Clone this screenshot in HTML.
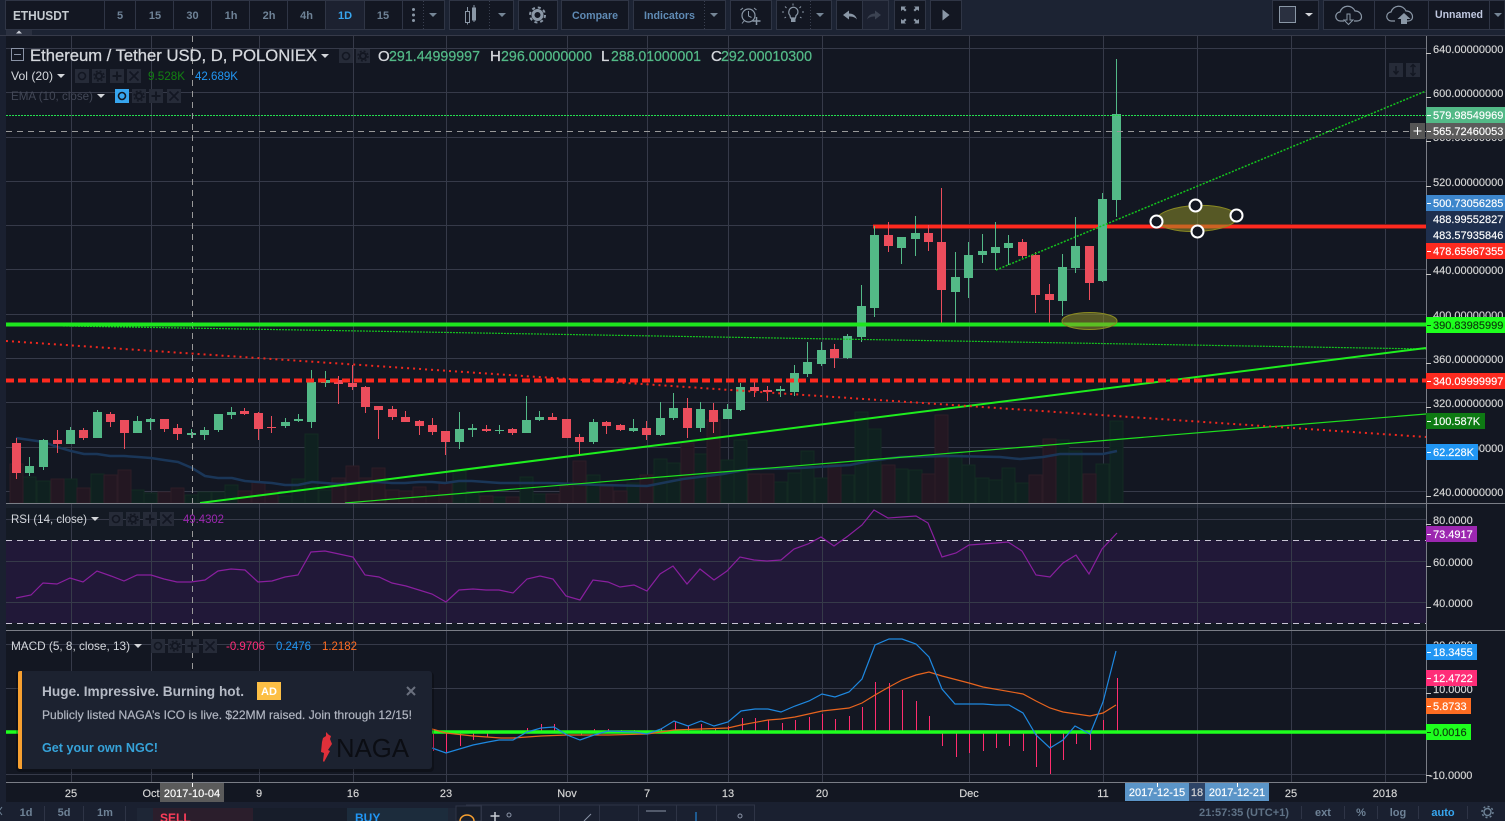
<!DOCTYPE html>
<html><head><meta charset="utf-8"><style>
html,body{margin:0;padding:0;background:#131722;width:1505px;height:821px;overflow:hidden}
svg{display:block}
text{font-family:"Liberation Sans",sans-serif}
.a{font-size:11px;fill:#d6d6d6;stroke:#d6d6d6;stroke-width:.15px}
.l{font-size:11px;fill:#fff;stroke:#fff;stroke-width:.15px}
.dk{fill:#0c3a0c;stroke:#0c3a0c}
.t{font-size:11px;fill:#d8d8d8;stroke:#d8d8d8;stroke-width:.15px;text-anchor:middle}
.w{fill:#fff;stroke:#fff}
.b{font-size:11px;font-weight:bold;fill:#6e8296;text-anchor:middle}
.n{font-size:11px;font-weight:bold;fill:#6e8296}
.h1{stroke:#d4d7dc;stroke-width:.3px}
.h2{stroke:#53b987;stroke-width:.25px}
</style></head><body>
<svg width="1505" height="821" viewBox="0 0 1505 821" xmlns="http://www.w3.org/2000/svg">
<defs>
<g id="e"><rect width="14" height="14" fill="#262b38"/><circle cx="7" cy="7" r="3.5" fill="none" stroke="#131722" stroke-width="1.6"/></g>
<g id="g"><rect width="14" height="14" fill="#262b38"/><circle cx="7" cy="7" r="3" fill="none" stroke="#131722" stroke-width="2"/><circle cx="7" cy="7" r="5" fill="none" stroke="#131722" stroke-width="1.4" stroke-dasharray="2 2"/></g>
<g id="p"><rect width="14" height="14" fill="#262b38"/><path d="M7 2.5v9M2.5 7h9" stroke="#131722" stroke-width="2"/></g>
<g id="x"><rect width="14" height="14" fill="#262b38"/><path d="M2.5 2.5l9 9M11.5 2.5l-9 9" stroke="#131722" stroke-width="1.6"/></g>
<g id="c"><path d="M0 0h8l-4 4z" fill="#d4d6da"/></g>
<g id="d"><path d="M0 0h8l-4 4z" fill="#758696"/></g>
</defs>

<rect width="1505" height="821" fill="#131722"/>
<rect x="6" y="504" width="1420" height="126" fill="#141a24"/>
<rect x="6" y="504" width="1420" height="4" fill="#1a212d"/>
<rect x="6" y="540" width="1420" height="83" fill="#211838"/>

<!-- grid -->
<path d="M71.5 36V782M151.5 36V782M259.5 36V782M353.5 36V782M446.5 36V782M567.5 36V782M647.5 36V782M728.5 36V782M822.5 36V782M969.5 36V782M1103.5 36V782M1197.5 36V782M1291.5 36V782M1385.5 36V782" stroke="#363a49" stroke-width="1"/>
<path d="M6 48.500H1426M6 92.500H1426M6 137.500H1426M6 181.500H1426M6 225.500H1426M6 269.500H1426M6 314.500H1426M6 358.500H1426M6 402.500H1426M6 447.500H1426M6 491.500H1426M6 519.500H1426M6 561.500H1426M6 602.500H1426M6 644.500H1426M6 688.500H1426M6 732.500H1426M6 774.500H1426" stroke="#363a49" stroke-width="1"/>

<!-- volume -->
<g shape-rendering="crispEdges" stroke-width="1">
<path fill="#0f2120" stroke="#132a22" d="M23 477h13V503h-13zM37 481h13V503h-13zM64 479h13V503h-13zM91 474h13V503h-13zM131 490h13V503h-13zM144 493h13V503h-13zM185 495h13V503h-13zM198 492h13V503h-13zM212 492h13V503h-13zM225 485h13V503h-13zM279 496h13V503h-13zM292 479h13V503h-13zM305 434h13V503h-13zM319 490h13V503h-13zM453 471h13V503h-13zM466 492h13V503h-13zM493 497h13V503h-13zM520 477h13V503h-13zM533 494h13V503h-13zM587 475h13V503h-13zM627 483h13V503h-13zM654 459h13V503h-13zM667 463h13V503h-13zM694 454h13V503h-13zM721 460h13V503h-13zM734 440h13V503h-13zM774 482h13V503h-13zM788 473h13V503h-13zM801 451h13V503h-13zM815 478h13V503h-13zM841 475h13V503h-13zM855 412h13V503h-13zM868 429h13V503h-13zM895 469h13V503h-13zM909 470h13V503h-13zM949 452h13V503h-13zM962 465h13V503h-13zM976 478h13V503h-13zM989 480h13V503h-13zM1002 468h13V503h-13zM1016 483h13V503h-13zM1056 440h13V503h-13zM1069 451h13V503h-13zM1096 464h13V503h-13zM1110 421h13V503h-13z"/>
<path fill="#231722" stroke="#2c1c27" d="M10 464h13V503h-13zM51 479h13V503h-13zM77 488h13V503h-13zM104 475h13V503h-13zM118 470h13V503h-13zM158 492h13V503h-13zM171 488h13V503h-13zM238 491h13V503h-13zM252 482h13V503h-13zM265 491h13V503h-13zM332 478h13V503h-13zM346 466h13V503h-13zM359 478h13V503h-13zM372 468h13V503h-13zM386 490h13V503h-13zM399 491h13V503h-13zM413 487h13V503h-13zM426 491h13V503h-13zM439 483h13V503h-13zM480 496h13V503h-13zM506 497h13V503h-13zM546 494h13V503h-13zM560 486h13V503h-13zM573 461h13V503h-13zM600 486h13V503h-13zM614 491h13V503h-13zM640 475h13V503h-13zM681 443h13V503h-13zM707 420h13V503h-13zM748 474h13V503h-13zM761 474h13V503h-13zM828 464h13V503h-13zM882 465h13V503h-13zM922 474h13V503h-13zM935 415h13V503h-13zM1029 475h13V503h-13zM1043 439h13V503h-13zM1083 474h13V503h-13z"/>
</g>
<!-- vol MA -->
<polyline fill="none" stroke="#1a3658" stroke-width="2.500" points="16,438 30,440 44,442 57,447 71,451 84,454 97,454 110,456 124,456 138,457 151,458 164,460 178,462 192,468 205,476 218,478 232,478 245,481 258,482 272,483 285,485 298,485 312,482 325,483 338,484 352,483 365,482 378,482 392,483 405,483 419,482 432,482 445,483 459,481 472,481 486,482 500,483 550,483 600,485 647,486 683,479 723,474 750,469 800,468 850,465 870,461 900,457 950,456 1000,457 1020,459 1043,457 1060,454 1103,454 1117,451"/>

<!-- red level behind candles -->
<path d="M873 226.500H1426" stroke="#7f1d1d" stroke-width="5"/>
<path d="M873 226.500H1426" stroke="#ff2a1f" stroke-width="3"/>

<!-- candles -->
<path shape-rendering="crispEdges" fill="none" stroke="#53b987" d="M29.5 457V476M43.5 439V470M70.5 427V444M97.5 410V438M137.5 416V433M150.5 418V430M191.5 429V438M204.5 427V440M218.5 414V432M231.5 407V419M285.500 418V428M298.5 414V422M311.5 370V428M325.5 371V387M459.5 412V449M472.5 424V437M499.5 425V434M526.5 396V433M539.5 411V421M593.5 419V444M633.5 419V432M660.5 402V436M673.5 393V420M700.5 402V432M727.5 404V419M740.5 383V411M780.5 386V397M794.5 365V396M807.5 342V377M821.5 342V366M847.5 334V359M861.5 285V342M874.5 226V317M901.5 237V264M915.5 216V256M955.5 252V326M968.5 242V298M982.5 234V263M995.5 222V270M1008.5 235V265M1062.5 254V316M1075.5 217V273M1102.5 193V282M1116.5 59V217"/>
<path shape-rendering="crispEdges" fill="#53b987" d="M25 466h9V473h-9zM39 440h9V467h-9zM66 430h9V444h-9zM93 412h9V438h-9zM133 421h9V433h-9zM146 419h9V422h-9zM187 433h9V435h-9zM200 430h9V435h-9zM214 414h9V430h-9zM227 412h9V415h-9zM281 422h9V426h-9zM294 419h9V421h-9zM307 382h9V422h-9zM321 380h9V383h-9zM455 429h9V442h-9zM468 428h9V430h-9zM495 430h9V431h-9zM522 420h9V433h-9zM535 417h9V420h-9zM589 422h9V442h-9zM629 428h9V431h-9zM656 418h9V435h-9zM669 408h9V418h-9zM696 409h9V428h-9zM723 409h9V419h-9zM736 387h9V410h-9zM776 389h9V391h-9zM790 373h9V392h-9zM803 362h9V374h-9zM817 350h9V364h-9zM843 336h9V358h-9zM857 306h9V337h-9zM870 235h9V308h-9zM897 237h9V248h-9zM911 233h9V239h-9zM951 277h9V292h-9zM964 255h9V278h-9zM978 251h9V255h-9zM991 247h9V253h-9zM1004 243h9V248h-9zM1058 267h9V301h-9zM1071 246h9V268h-9zM1098 199h9V281h-9zM1112 114h9V200h-9z"/>
<path shape-rendering="crispEdges" fill="none" stroke="#eb4d5c" d="M16.5 438V479M57.5 430V453M83.5 428V440M110.5 412V427M124.5 420V449M164.5 419V432M177.5 424V440M244.5 408V415M258.5 412V440M271.5 416V433M338.5 376V404M352.5 365V390M365.5 386V413M378.5 406V439M392.5 406V420M405.5 411V422M419.5 420V435M432.5 418V435M445.5 431V455M486.5 425V432M512.5 428V435M552.5 413V420M566.5 419V438M579.5 434V455M606.5 421V434M620.5 424V431M646.5 421V440M687.5 398V438M713.5 403V433M754.5 381V397M767.5 386V401M834.5 344V368M888.5 222V252M928.5 225V251M941.5 188V326M1022.5 239V258M1035.5 252V313M1049.5 284V325M1089.5 246V300"/>
<path shape-rendering="crispEdges" fill="#eb4d5c" d="M12 443h9V473h-9zM53 440h9V444h-9zM79 430h9V438h-9zM106 414h9V422h-9zM120 420h9V433h-9zM160 419h9V429h-9zM173 428h9V434h-9zM240 411h9V414h-9zM254 413h9V429h-9zM267 427h9V428h-9zM334 380h9V384h-9zM348 383h9V387h-9zM361 387h9V407h-9zM374 406h9V410h-9zM388 409h9V417h-9zM401 417h9V422h-9zM415 421h9V426h-9zM428 425h9V432h-9zM441 431h9V442h-9zM482 429h9V431h-9zM508 429h9V433h-9zM548 417h9V420h-9zM562 419h9V438h-9zM575 437h9V442h-9zM602 422h9V426h-9zM616 425h9V430h-9zM642 428h9V435h-9zM683 408h9V428h-9zM709 410h9V422h-9zM750 387h9V391h-9zM763 390h9V392h-9zM830 349h9V358h-9zM884 235h9V246h-9zM924 233h9V242h-9zM937 242h9V290h-9zM1018 242h9V256h-9zM1031 255h9V295h-9zM1045 294h9V300h-9zM1085 246h9V283h-9z"/>

<!-- trend lines -->
<path d="M6 115.500H1426" stroke="#25e050" stroke-width="1" stroke-dasharray="2 1" shape-rendering="crispEdges"/>
<path d="M6 131.500H1426" stroke="#9a9a9a" stroke-width="1" stroke-dasharray="6 5"/>
<path d="M192.500 36V782" stroke="#9a9a9a" stroke-width="1" stroke-dasharray="6 5"/>
<path d="M996 270L1426 91" stroke="#14c41e" stroke-width="1.500" stroke-dasharray="2 1.500"/>
<path d="M6 325L1426 349" stroke="#14c41e" stroke-width="1.200" stroke-dasharray="2 1"/>
<path d="M200 503L1426 348" stroke="#1eee1e" stroke-width="2"/>
<path d="M345 503L1426 414" stroke="#1ee01e" stroke-width="1.200"/>
<path d="M6 341L1426 437" stroke="#f0281e" stroke-width="2" stroke-dasharray="2 4"/>
<path d="M6 380.500H1426" stroke="#ff2a1f" stroke-width="4" stroke-dasharray="8 4"/>
<path d="M6 324.500H1426" stroke="#1ee61e" stroke-width="4"/>

<!-- ellipses -->
<ellipse cx="1089.500" cy="321" rx="27.500" ry="8.500" fill="#9a9a28" fill-opacity=".5" stroke="#8b8b22" stroke-width="1"/>
<ellipse cx="1197" cy="218.500" rx="40" ry="13" fill="#9a9a28" fill-opacity=".5" stroke="#8b8b22" stroke-width="1" transform="rotate(-2 1197 218.500)"/>
<g fill="#131722" stroke="#fff" stroke-width="2"><circle cx="1156.500" cy="221.500" r="6"/><circle cx="1195.500" cy="205.500" r="6"/><circle cx="1197.500" cy="231.500" r="6"/><circle cx="1236.500" cy="215.500" r="6"/></g>

<!-- RSI -->
<path d="M6 540.500H1426M6 623.500H1426" stroke="#c8c4d4" stroke-width="1" stroke-dasharray="6 5"/>
<polyline fill="none" stroke="#8a1f9f" stroke-width="1.200" points="16,598 31,595 43,583 57,584 70,578 83,582 97,571 111,576 124,581 137,575 151,575 164,579 177,582 191,582 205,580 218,571 231,569 245,570 258,582 272,581 285,577 298,575 311,552 325,551 339,554 353,557 365,575 379,577 392,583 406,586 419,590 432,594 446,602 459,590 473,589 486,590 499,590 513,593 527,579 540,576 553,579 566,596 580,600 593,580 608,582 620,587 634,585 647,591 660,574 673,566 687,584 700,569 714,580 727,571 740,557 754,560 767,561 781,560 794,549 808,544 821,537 834,546 848,536 862,525 874,510 888,518 902,517 916,516 928,523 942,557 956,553 969,545 983,544 996,543 1008,542 1022,551 1036,575 1050,577 1063,563 1076,555 1089,574 1102,549 1117,533"/>

<!-- MACD -->
<path d="M433.500 732V751M446.500 732V753M460.500 732V746M473.500 732V740M487.500 732V737M500.500 732V733M527.500 732V728M541.500 732V724M554.500 732V724M567.500 732V733M581.500 732V735M594.500 732V729M608.500 732V729M621.500 732V730M634.500 732V730M647.500 732V734M661.500 732V728M675.500 732V722M688.500 732V726M701.500 732V724M715.500 732V728M728.500 732V726M742.500 732V718M755.500 732V718M768.500 732V720M782.500 732V723M795.500 732V720M809.500 732V717M822.500 732V714M835.500 732V719M849.500 732V716M862.500 732V707M875.500 732V682M889.500 732V683M902.500 732V690M916.500 732V701M929.500 732V716M942.500 732V746M956.500 732V757M969.500 732V753M983.500 732V751M996.500 732V748M1009.500 732V746M1023.500 732V751M1036.500 732V767M1050.500 732V774M1063.500 732V760M1076.500 732V744M1090.500 732V750M1103.500 732V720M1117.500 732V678" stroke="#ff2d6e" stroke-width="1"/>
<path d="M6 732H1426" stroke="#1eff1e" stroke-width="3.500"/>
<polyline fill="none" stroke="#e8641e" stroke-width="1.200" points="432,729 446,733 473,736 501,738 513,738 541,736 567,735 609,735 647,734 661,732 674,730 701,729 728,728 741,725 768,720 781,719 795,717 822,711 849,708 862,703 875,695 889,687 902,680 916,675 929,672 942,676 969,683 983,687 1023,694 1036,701 1050,708 1063,712 1090,716 1103,713 1116,705"/>
<polyline fill="none" stroke="#1e88e0" stroke-width="1.200" points="432,748 446,753 473,745 488,742 499,740 513,740 527,732 541,728 554,727 567,735 580,740 594,735 608,731 634,732 647,734 661,729 674,721 688,726 701,721 714,726 728,722 741,711 755,709 768,709 781,712 795,706 809,701 822,694 835,697 849,692 862,679 875,645 889,639 902,639 916,644 929,657 942,689 955,704 969,704 983,704 996,705 1009,705 1023,713 1036,735 1050,748 1063,740 1075,726 1090,734 1103,702 1116,651"/>

<!-- separators and axis -->
<rect x="6" y="503" width="1420" height="1" fill="#7a7d86"/>
<rect x="6" y="630" width="1420" height="1" fill="#7a7d86"/>
<rect x="6" y="782" width="1420" height="1" fill="#7a7d86"/>
<rect x="1426" y="36" width="79" height="746" fill="#131722"/>
<rect x="1426" y="36" width="1" height="747" fill="#7a7d86"/>
<rect x="1427" y="503" width="78" height="1" fill="#7a7d86"/>
<rect x="1427" y="630" width="78" height="1" fill="#7a7d86"/>

<!-- price axis -->
<g>
<text class="a" x="1433" y="53">640.00000000</text>
<text class="a" x="1433" y="97">600.00000000</text>
<text class="a" x="1433" y="141">560.00000000</text>
<text class="a" x="1433" y="186">520.00000000</text>
<text class="a" x="1433" y="274">440.00000000</text>
<text class="a" x="1433" y="319">400.00000000</text>
<text class="a" x="1433" y="363">360.00000000</text>
<text class="a" x="1433" y="407">320.00000000</text>
<text class="a" x="1433" y="452">280.00000000</text>
<text class="a" x="1433" y="496">240.00000000</text>
<text class="a" x="1433" y="524">80.0000</text>
<text class="a" x="1433" y="566">60.0000</text>
<text class="a" x="1433" y="607">40.0000</text>
<text class="a" x="1433" y="649">20.0000</text>
<text class="a" x="1433" y="693">10.0000</text>
<text class="a" x="1429" y="779">-10.0000</text>
</g>
<rect x="1426" y="107" width="79" height="16" fill="#53b987"/><text class="l" x="1433" y="119">579.98549969</text>
<rect x="1426" y="123" width="79" height="16" fill="#5c5c5c"/><text class="l" x="1433" y="135">565.72460053</text>
<rect x="1410" y="123" width="15" height="16" fill="#555"/><path d="M1417.500 127v8M1413.500 131h8" stroke="#fff" stroke-width="1"/>
<rect x="1426" y="195" width="79" height="16" fill="#3d86cc"/><text class="l" x="1433" y="207">500.73056285</text>
<rect x="1426" y="211" width="79" height="16" fill="#1e2f4e"/><text class="l" x="1433" y="223">488.99552827</text>
<rect x="1426" y="227" width="79" height="16" fill="#1e2f4e"/><text class="l" x="1433" y="239">483.57935846</text>
<rect x="1426" y="243" width="79" height="16" fill="#ff2a1f"/><text class="l" x="1433" y="255">478.65967355</text>
<rect x="1426" y="317" width="79" height="16" fill="#1eff1e"/><text class="l dk" x="1433" y="329">390.83985999</text>
<rect x="1426" y="373" width="79" height="16" fill="#ff2a1f"/><text class="l" x="1433" y="385">340.09999997</text>
<rect x="1426" y="413" width="59" height="16" fill="#0e7a13"/><text class="l" x="1433" y="425">100.587K</text>
<rect x="1426" y="444" width="52" height="16" fill="#2196f3"/><text class="l" x="1433" y="456">62.228K</text>
<rect x="1426" y="526" width="51" height="16" fill="#9c27b0"/><text class="l" x="1433" y="538">73.4917</text>
<rect x="1426" y="644" width="51" height="16" fill="#2196f3"/><text class="l" x="1433" y="656">18.3455</text>
<rect x="1426" y="670" width="51" height="16" fill="#ff2d78"/><text class="l" x="1433" y="682">12.4722</text>
<rect x="1426" y="698" width="45" height="16" fill="#ff6d22"/><text class="l" x="1433" y="710">5.8733</text>
<rect x="1426" y="724" width="45" height="16" fill="#1eff1e"/><text class="l dk" x="1433" y="736">0.0016</text>
<path d="M1426 53.500h5M1426 97.500h5M1426 141.500h5M1426 186.500h5M1426 274.500h5M1426 363.500h5M1426 407.500h5M1426 496.500h5M1426 524.500h5M1426 566.500h5M1426 607.500h5M1426 693.500h5M1426 775.500h5" stroke="#c8c8c8"/>
<path d="M1427 115.500h4M1427 131.500h4M1427 203.500h4M1427 251.500h4M1427 381.500h4M1427 421.500h4M1427 452.500h4M1427 534.500h4M1427 652.500h4M1427 678.500h4M1427 706.500h4" stroke="#fff"/>
<path d="M1427 325.500h4M1427 732.500h4" stroke="#0c3a0c"/>

<!-- top right small buttons -->
<rect x="1389" y="63" width="14" height="14" fill="#262b38"/><path d="M1396 66v7M1393.500 71l2.500 3 2.500-3" stroke="#131722" stroke-width="1.400" fill="none"/>
<rect x="1406" y="63" width="14" height="14" fill="#262b38"/><path d="M1413 65v10M1410.500 67l2.500-2.500 2.500 2.500M1410.500 73l2.500 2.500 2.500-2.500" stroke="#131722" stroke-width="1.400" fill="none"/>

<!-- legends -->
<rect x="11.500" y="48.500" width="12" height="12" fill="none" stroke="#8a93a6"/><path d="M14 54.500h7" stroke="#8a93a6"/>
<text class="h1" x="30" y="61" font-size="17" fill="#d4d7dc" textLength="287" lengthAdjust="spacingAndGlyphs">Ethereum / Tether USD, D, POLONIEX</text>
<use href="#c" x="321" y="54"/>
<use href="#e" x="339" y="49"/><use href="#g" x="356" y="49"/>
<g font-size="15"><text class="h1" x="378" y="61" fill="#d4d7dc" textLength="10">O</text><text class="h2" x="389" y="61" fill="#53b987" textLength="91" lengthAdjust="spacingAndGlyphs">291.44999997</text>
<text class="h1" x="490" y="61" fill="#d4d7dc" textLength="10">H</text><text class="h2" x="501" y="61" fill="#53b987" textLength="91" lengthAdjust="spacingAndGlyphs">296.00000000</text>
<text class="h1" x="601" y="61" fill="#d4d7dc" textLength="9">L</text><text class="h2" x="611" y="61" fill="#53b987" textLength="90" lengthAdjust="spacingAndGlyphs">288.01000001</text>
<text class="h1" x="711" y="61" fill="#d4d7dc" textLength="10">C</text><text class="h2" x="721" y="61" fill="#53b987" textLength="91" lengthAdjust="spacingAndGlyphs">292.00010300</text></g>

<text x="11" y="80" font-size="12" fill="#d4d7dc" textLength="42" lengthAdjust="spacingAndGlyphs">Vol (20)</text><use href="#c" x="57" y="74"/>
<use href="#e" x="75" y="69"/><use href="#g" x="92" y="69"/><use href="#p" x="110" y="69"/><use href="#x" x="127" y="69"/>
<text x="148" y="80" font-size="12" fill="#128012" textLength="37" lengthAdjust="spacingAndGlyphs">9.528K</text>
<text x="195" y="80" font-size="12" fill="#2196f3" textLength="43" lengthAdjust="spacingAndGlyphs">42.689K</text>

<text x="11" y="100" font-size="12" fill="#434857" textLength="82" lengthAdjust="spacingAndGlyphs">EMA (10, close)</text><use href="#c" x="97" y="94"/>
<rect x="115" y="89" width="14" height="14" fill="#37a6ef"/><circle cx="122" cy="96" r="3.500" fill="none" stroke="#131722" stroke-width="1.600"/>
<use href="#g" x="132" y="89"/><use href="#p" x="149" y="89"/><use href="#x" x="167" y="89"/>

<text x="11" y="523" font-size="12" fill="#d4d7dc" textLength="76" lengthAdjust="spacingAndGlyphs">RSI (14, close)</text><use href="#c" x="91" y="517"/>
<use href="#e" x="109" y="512"/><use href="#g" x="126" y="512"/><use href="#p" x="143" y="512"/><use href="#x" x="160" y="512"/>
<text x="183" y="523" font-size="12" fill="#9c27b0" textLength="41" lengthAdjust="spacingAndGlyphs">49.4302</text>

<text x="11" y="650" font-size="12" fill="#d4d7dc" textLength="119" lengthAdjust="spacingAndGlyphs">MACD (5, 8, close, 13)</text><use href="#c" x="134" y="644"/>
<use href="#e" x="151" y="639"/><use href="#g" x="168" y="639"/><use href="#p" x="185" y="639"/><use href="#x" x="203" y="639"/>
<text x="226" y="650" font-size="12" fill="#ff2d78" textLength="39" lengthAdjust="spacingAndGlyphs">-0.9706</text>
<text x="276" y="650" font-size="12" fill="#2196f3" textLength="35" lengthAdjust="spacingAndGlyphs">0.2476</text>
<text x="322" y="650" font-size="12" fill="#ff6d22" textLength="35" lengthAdjust="spacingAndGlyphs">1.2182</text>

<!-- ad -->
<rect x="16" y="672" width="418" height="100" rx="4" fill="#000" fill-opacity=".25"/>
<rect x="18" y="671" width="414" height="98" rx="3" fill="#1c2230"/>
<path d="M22 671h-2a2 2 0 0 0-2 2v94a2 2 0 0 0 2 2h2z" fill="#f7a030"/>
<text x="42" y="696" font-size="14" font-weight="bold" fill="#b5bac5" textLength="202" lengthAdjust="spacingAndGlyphs">Huge. Impressive. Burning hot.</text>
<rect x="257" y="682" width="24" height="18" fill="#fcbf45"/><text x="269" y="695" font-size="11" font-weight="bold" fill="#fff" text-anchor="middle">AD</text>
<path d="M407 687l8 8M415 687l-8 8" stroke="#6a707e" stroke-width="2"/>
<text x="42" y="719" font-size="12" fill="#b0b5c0" stroke="#b0b5c0" stroke-width=".2" textLength="370" lengthAdjust="spacingAndGlyphs">Publicly listed NAGA’s ICO is live. $22MM raised. Join through 12/15!</text>
<text x="42" y="752" font-size="13" font-weight="bold" fill="#36a3d9" textLength="116" lengthAdjust="spacingAndGlyphs">Get your own NGC!</text>
<path d="M326 732l3 3 2 1-1 3 2 5-4 6 2 1-6 11-1-1 1-8-3-1 1-10 1-4 3-2z" fill="#e0303a"/>
<text x="336" y="757" font-size="26" fill="#0b0d13" textLength="73" lengthAdjust="spacingAndGlyphs">NAGA</text>

<!-- time axis -->
<rect x="0" y="783" width="1505" height="19" fill="#131722"/>
<text class="t" x="71" y="797">25</text><text class="t" x="151" y="797">Oct</text>
<text class="t" x="259" y="797">9</text><text class="t" x="353" y="797">16</text><text class="t" x="446" y="797">23</text><text class="t" x="567" y="797">Nov</text><text class="t" x="647" y="797">7</text><text class="t" x="728" y="797">13</text><text class="t" x="822" y="797">20</text><text class="t" x="969" y="797">Dec</text><text class="t" x="1103" y="797">11</text><text class="t" x="1291" y="797">25</text><text class="t" x="1385" y="797">2018</text>
<rect x="160" y="783" width="64" height="19" fill="#5b5b5b"/><text class="t w" x="192" y="797">2017-10-04</text>
<rect x="1125" y="783" width="64" height="18" fill="#5b95c8"/><text class="t w" x="1157" y="796">2017-12-15</text>
<rect x="1189" y="783" width="16" height="18" fill="#2e4466"/><text class="t" x="1197" y="796">18</text>
<rect x="1205" y="783" width="64" height="18" fill="#5b95c8"/><text class="t w" x="1237" y="796">2017-12-21</text>
<path d="M192.500 783v4M1157.500 783v4M1237.500 783v4" stroke="#fff"/>

<!-- bottom bar -->
<rect x="0" y="802" width="1505" height="19" fill="#1a2030"/>
<path d="M44.500 806v15M83.500 806v15M125.500 806v15" stroke="#2e3446"/>
<g><text class="b" x="26" y="816">1d</text><text class="b" x="64" y="816">5d</text><text class="b" x="105" y="816">1m</text></g>
<rect x="137" y="808" width="16" height="13" fill="#1e2636"/>
<rect x="153" y="808" width="100" height="13" fill="#2b1e2c"/><text x="160" y="822" font-size="12" font-weight="bold" fill="#ff3d5a">SELL</text>
<rect x="253" y="808" width="94" height="13" fill="#171d2a"/>
<rect x="347" y="808" width="101" height="13" fill="#1c2c3c"/><text x="355" y="822" font-size="12" font-weight="bold" fill="#2196f3">BUY</text>
<rect x="448" y="808" width="8" height="13" fill="#1e2636"/>
<path d="M466.500 821v-16h288v16M481.500 805v16M559.500 805v16M599.500 805v16M638.500 805v16M676.500 805v16M716.500 805v16" stroke="#2e3446" fill="none"/>
<rect x="456" y="806" width="25" height="15" fill="#171d2a" stroke="#2e3446"/>
<path d="M460 821a7 6 0 0 1 14 0" stroke="#f7a030" stroke-width="1.500" fill="none"/>
<path d="M495 812v9M490.500 816h9" stroke="#c8ccd4" stroke-width="1.500"/>
<circle cx="509" cy="815" r="2" fill="none" stroke="#8a93a6"/>
<path d="M584 821l7-7" stroke="#8a93a6"/>
<path d="M646 811h20" stroke="#8a93a6"/>
<path d="M696 812v9" stroke="#2196f3"/>
<circle cx="740" cy="816" r="2" fill="none" stroke="#8a93a6"/>
<text x="1199" y="816" font-size="11" font-weight="bold" fill="#5f7286" textLength="90" lengthAdjust="spacingAndGlyphs">21:57:35 (UTC+1)</text>
<path d="M1301.500 806v13M1344.500 806v13M1377.500 806v13M1418.500 806v13M1467.500 806v13" stroke="#2e3446"/>
<text class="b" x="1323" y="816">ext</text><text class="b" x="1361" y="816">%</text><text class="b" x="1398" y="816">log</text>
<text class="b" x="1443" y="816" style="fill:#37a6ef">auto</text>
<circle cx="1487.500" cy="812" r="3.500" fill="none" stroke="#6e8296" stroke-width="1.500"/><circle cx="1487.500" cy="812" r="5.500" fill="none" stroke="#6e8296" stroke-width="1.500" stroke-dasharray="2 2.300"/>

<!-- left bar -->
<rect x="0" y="36" width="6" height="785" fill="#1a2030"/>
<path d="M2 807l-3 4 3 4" stroke="#6e8296" fill="none"/>

<!-- top toolbar -->
<rect x="0" y="0" width="1505" height="35" fill="#1c2333"/>
<rect x="0" y="35" width="1505" height="1" fill="#363a49"/>
<rect x="6" y="30" width="26" height="5" fill="#2a3040"/><path d="M16 33.500h6l-3-3z" fill="#c8ccd4"/>
<g fill="#131722" stroke="#2f3545">
<rect x="5.500" y="0.500" width="439" height="29"/>
<rect x="449.500" y="0.500" width="64" height="29"/>
<rect x="518.500" y="0.500" width="39" height="29"/>
<rect x="561.500" y="0.500" width="67" height="29"/>
<rect x="633.500" y="0.500" width="92" height="29"/>
<rect x="730.500" y="0.500" width="41" height="29"/>
<rect x="776.500" y="0.500" width="55" height="29"/>
<rect x="836.500" y="0.500" width="52" height="29"/>
<rect x="894.500" y="0.500" width="31" height="29"/>
<rect x="930.500" y="0.500" width="31" height="29"/>
<rect x="1272.500" y="0.500" width="46" height="29"/>
<rect x="1323.500" y="0.500" width="181.500" height="29"/>
</g>
<rect x="326" y="1" width="38" height="28" fill="#1c2130"/>
<rect x="863" y="1" width="25" height="28" fill="#1c2130"/>
<path d="M104.500 0v29M135.500 0v29M173.500 0v29M211.500 0v29M249.500 0v29M287.500 0v29M325.500 0v29M364.500 0v29M402.500 0v29M862.500 0v29M1374.500 0v29M1428.500 0v29M1489.500 0v29" stroke="#2f3545"/>
<path d="M423.500 1v28M704.500 1v28M810.500 1v28M489.500 1v28" stroke="#3a4050" stroke-dasharray="1 2"/>
<text x="13" y="20" font-size="13" font-weight="bold" fill="#c5cbd0" textLength="56" lengthAdjust="spacingAndGlyphs">ETHUSDT</text>
<text class="b" x="120" y="19">5</text><text class="b" x="155" y="19">15</text><text class="b" x="192.500" y="19">30</text><text class="b" x="231" y="19">1h</text><text class="b" x="269" y="19">2h</text><text class="b" x="306.500" y="19">4h</text><text class="b" x="345" y="19" style="fill:#37a6ef">1D</text><text class="b" x="383" y="19">15</text>
<circle cx="413.500" cy="9.500" r="1.500" fill="#8a97a6"/><circle cx="413.500" cy="15" r="1.500" fill="#8a97a6"/><circle cx="413.500" cy="20.500" r="1.500" fill="#8a97a6"/>
<use href="#d" x="429" y="13"/>
<path d="M465.500 11.500h4v11h-4zM467.500 7v4.500M467.500 22.500v2" stroke="#8a97a6" fill="none"/><rect x="472" y="7.500" width="4" height="13" fill="#8a97a6"/><path d="M474 5v17" stroke="#8a97a6"/>
<use href="#d" x="498" y="13"/>
<circle cx="537.500" cy="15" r="4.500" fill="none" stroke="#8a97a6" stroke-width="3"/><circle cx="537.500" cy="15" r="7.500" fill="none" stroke="#8a97a6" stroke-width="2" stroke-dasharray="3 2.900"/>
<text x="572" y="19" class="n" style="fill:#5f8bb5" textLength="46" lengthAdjust="spacingAndGlyphs">Compare</text>
<text x="644" y="19" class="n" style="fill:#5f8bb5" textLength="51" lengthAdjust="spacingAndGlyphs">Indicators</text>
<use href="#d" x="710" y="13"/>
<circle cx="748.500" cy="15.500" r="6.500" fill="none" stroke="#8a97a6" stroke-width="1.200"/><path d="M748.500 11v5l3 1.500M743 8l-2.500 2M754 8l2.500 2M744 21l-2 2.500" stroke="#8a97a6" fill="none"/><path d="M756.500 17v8M752.500 21h8" stroke="#8a97a6" stroke-width="1.500"/>
<path d="M789 11a4.500 4.500 0 1 1 7 4.500l-.5 2.500h-5l-.5-2.500a4.500 4.500 0 0 1-1-4.500z" fill="none" stroke="#8a97a6" stroke-width="1.200"/><rect x="791" y="18" width="4.500" height="4" fill="#8a97a6"/><path d="M793 3.500v2M785 6.500l1.500 1.500M801 6.500l-1.500 1.500M784 12h-2M802 12h2M786 17l-1.500 1M800 17l1.500 1" stroke="#8a97a6"/>
<use href="#d" x="816" y="13"/>
<path d="M843 15l6-4.500v3c4 0 7 2 8 6-2-2.500-4.500-3-8-3v3z" fill="#8a97a6"/>
<path d="M881 15l-6-4.500v3c-4 0-7 2-8 6 2-2.500 4.500-3 8-3v3z" fill="#3c4352"/>
<path d="M901 6.500l5 0-1.500 1.500 2 2-1.500 1.500-2-2-2 1.500zM919 6.500l-5 0 1.500 1.500-2 2 1.500 1.500 2-2 2 1.500zM901 23.500l5 0-1.500-1.500 2-2-1.500-1.500-2 2-2-1.500zM919 23.500l-5 0 1.500-1.500-2-2 1.500-1.500 2 2 2-1.500z" fill="#8a97a6"/>
<path d="M942.500 9.500l7 5.500-7 5.500z" fill="#8a97a6"/>
<rect x="1279.500" y="6.500" width="16" height="16" fill="#2a3040" stroke="#8a97a6"/>
<path d="M1305 13h8l-4 3.500z" fill="#d4d6da"/>
<g transform="translate(4 0)"><path d="M1340 21h-3.500a4.500 4.500 0 0 1-.5-9 8 8 0 0 1 15-1 6 6 0 0 1 6.500 6c0 2.500-2 4-4.500 4h-3" fill="none" stroke="#8a97a6" stroke-width="1.200"/><path d="M1346 14v6h3l-4.500 4.500-4.500-4.500h3v-6z" fill="#131722" stroke="#8a97a6"/>
<path d="M1391 21h-3.500a4.500 4.500 0 0 1-.5-9 8 8 0 0 1 15-1 6 6 0 0 1 6.500 6c0 2.500-2 4-4.500 4h-3" fill="none" stroke="#8a97a6" stroke-width="1.200"/><path d="M1400 13l6.500 6h-3.500v5h-6v-5h-3.500z" fill="#8a97a6"/></g>
<text x="1435" y="18" class="n" style="fill:#c0c8e0" textLength="48" lengthAdjust="spacingAndGlyphs">Unnamed</text>
<use href="#d" x="1494" y="13"/>
</svg>
</body></html>
